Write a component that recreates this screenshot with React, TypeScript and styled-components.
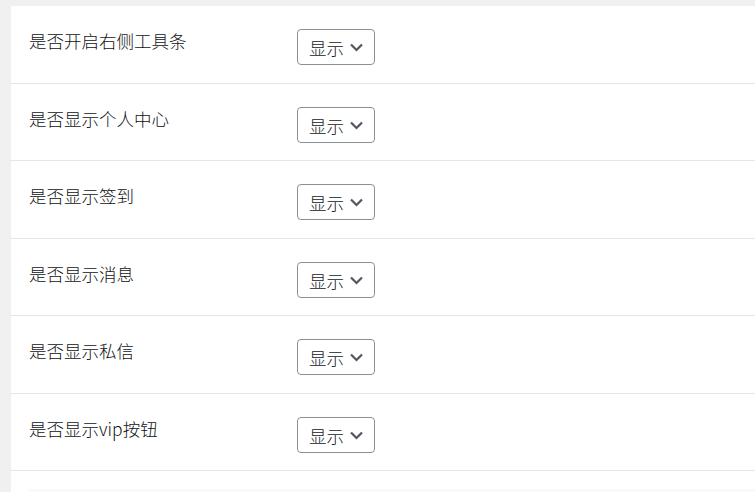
import { createGlobalStyle } from "styled-components";
import styled from "styled-components";

const GlobalStyle = createGlobalStyle`
  html, body {
    margin: 0;
    padding: 0;
    background: #f0f0f0;
    overflow: hidden;
  }
  body {
    font-family: "Noto Sans CJK SC", "Noto Sans", sans-serif;
  }
`;

const StyledPage = styled.div`
  width: 755px;
  height: 492px;
  padding: 6px 0 0 11px;
  box-sizing: border-box;
  overflow: hidden;
`;

const StyledPanel = styled.div`
  background: #ffffff;
  width: 800px;
  min-height: 500px;
`;

const StyledRow = styled.div`
  display: grid;
  grid-template-columns: 286px 1fr;
  height: 76.5px;
  border-bottom: 1px solid #e6e6e6;
  box-sizing: content-box;
`;

const StyledLabel = styled.div`
  padding: 23px 0 0 18px;
  font-size: 17.5px;
  font-weight: 300;
  line-height: 24px;
  color: #0f1215;
`;

const StyledField = styled.div`
  padding-top: 23px;
`;

const StyledSelect = styled.div`
  display: inline-flex;
  align-items: center;
  box-sizing: border-box;
  width: 78px;
  height: 36px;
  padding: 1px 0 0 11px;
  border: 1px solid #8c8f94;
  border-radius: 4px;
  font-size: 17.5px;
  font-weight: 300;
  color: #14181b;
  gap: 5px;

  svg {
    flex: none;
    margin-top: -1px;
  }
`;

const StyledFootBlock = styled.div`
  margin: 18px 0 0 17px;
  height: 20px;
  background: #fafafa;
`;

const Chevron = () => (
  <svg width="15" height="10" viewBox="0 0 15 10">
    <path
      d="M2 2.5 L7.5 8 L13 2.5"
      fill="none"
      stroke="#50575e"
      strokeWidth="2.2"
    />
  </svg>
);

const OPTIONS = [
  "是否开启右侧工具条",
  "是否显示个人中心",
  "是否显示签到",
  "是否显示消息",
  "是否显示私信",
  "是否显示vip按钮",
];

const App = () => {
  return (
    <StyledPage>
      <GlobalStyle />
      <StyledPanel>
        {OPTIONS.map((label) => (
          <StyledRow key={label}>
            <StyledLabel>{label}</StyledLabel>
            <StyledField>
              <StyledSelect>
                显示
                <Chevron />
              </StyledSelect>
            </StyledField>
          </StyledRow>
        ))}
        <StyledFootBlock />
      </StyledPanel>
    </StyledPage>
  );
};

export default App;
